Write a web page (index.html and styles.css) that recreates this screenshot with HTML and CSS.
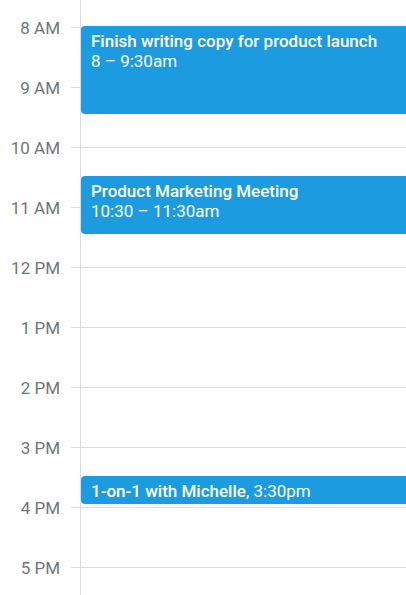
FILE: index.html
```html
<!DOCTYPE html>
<html lang="en">
<head>
<meta charset="utf-8">
<title>Day view</title>
<link rel="stylesheet" href="styles.css">
</head>
<body>
<div class="day">
  <div class="rows">
    <div class="hour"><span class="label">8 AM</span><span class="line"></span></div>
    <div class="hour"><span class="label">9 AM</span><span class="line"></span></div>
    <div class="hour"><span class="label">10 AM</span><span class="line"></span></div>
    <div class="hour"><span class="label">11 AM</span><span class="line"></span></div>
    <div class="hour"><span class="label">12 PM</span><span class="line"></span></div>
    <div class="hour"><span class="label">1 PM</span><span class="line"></span></div>
    <div class="hour"><span class="label">2 PM</span><span class="line"></span></div>
    <div class="hour"><span class="label">3 PM</span><span class="line"></span></div>
    <div class="hour"><span class="label">4 PM</span><span class="line"></span></div>
    <div class="hour"><span class="label">5 PM</span><span class="line"></span></div>
  </div>
  <div class="events">
    <div class="event" style="top:26px;height:88px">
      <div class="title">Finish writing copy for product launch</div>
      <div class="time">8 – 9:30am</div>
    </div>
    <div class="event" style="top:176px;height:58px">
      <div class="title">Product Marketing Meeting</div>
      <div class="time">10:30 – 11:30am</div>
    </div>
    <div class="event" style="top:476px;height:28px">
      <div class="title">1-on-1 with Michelle<span class="time-inline">, 3:30pm</span></div>
    </div>
  </div>
</div>
</body>
</html>
```
FILE: styles.css
```css
html, body {
  margin: 0;
  padding: 0;
  overflow: hidden;
  background: #ffffff;
}

body {
  font-family: Roboto, "Liberation Sans", sans-serif;
}

.day {
  position: relative;
  display: flow-root;
  height: 595px;
}

.rows {
  display: flex;
  flex-direction: column;
  margin-top: -3px;
}

.hour {
  display: flex;
  align-items: center;
  height: 60px;
}

.label {
  width: 60px;
  text-align: right;
  font-size: 17px;
  line-height: 20px;
  padding-top: 2px;
  color: #70757a;
}

.line {
  flex: 1;
  height: 1px;
  margin-left: 11px;
  background: #dadce0;
}

.events {
  position: absolute;
  top: 0;
  bottom: 0;
  left: 80px;
  right: 0;
  border-left: 1px solid #dadce0;
}

.event {
  position: absolute;
  left: 0;
  right: -8px;
  box-sizing: border-box;
  background: #1c9be0;
  border-radius: 4px;
  padding: 5px 10px 0;
  color: #ffffff;
  font-size: 17px;
  line-height: 20px;
  overflow: hidden;
}

.title {
  font-weight: 500;
  white-space: nowrap;
}

.time,
.time-inline {
  font-weight: 400;
}
```
